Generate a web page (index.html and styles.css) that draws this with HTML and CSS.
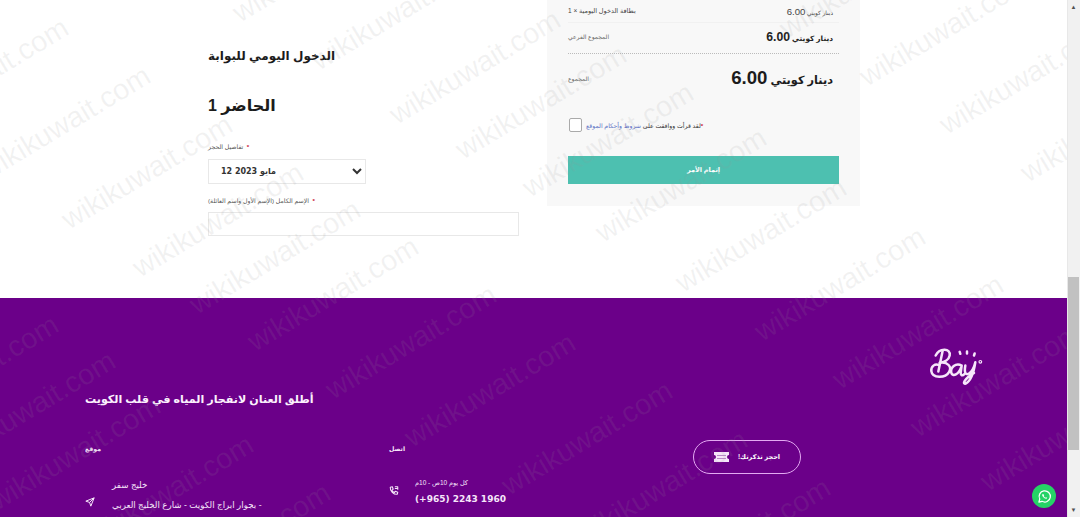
FILE: index.html
```html
<!DOCTYPE html>
<html lang="ar">
<head>
    <meta charset="UTF-8">
    <title>Bay</title>
    <link rel="stylesheet" href="styles.css">
</head>
<body>
    <div class="page">
        <div class="main">
            <section class="booking">
                <form class="booking-form">
                    <h2 class="form-title" dir="rtl">الدخول اليومي للبوابة</h2>
                    <h3 class="form-count" dir="rtl">الحاضر 1</h3>
                    <label class="field-label" dir="rtl"><span class="req">*</span>&nbsp; تفاصيل الحجز</label>
                    <select class="field-select">
                        <option>12 2023 مايو</option>
                    </select>
                    <label class="field-label field-label-name" dir="rtl"><span class="req">*</span>&nbsp; الإسم الكامل (الإسم الأول واسم العائلة)</label>
                    <input class="field-input" type="text">
                </form>

                <div class="order-card">
                    <div class="order-row order-row-item">
                        <span class="item-name" dir="rtl">بطاقة الدخول اليومية × 1</span>
                        <span class="item-price" dir="rtl">دينار كويتي <span class="amount">6.00</span></span>
                    </div>
                    <div class="order-row order-row-sub">
                        <span class="sum-label" dir="rtl">المجموع الفرعي</span>
                        <span class="sub-price" dir="rtl">دينار كويتي <span class="amount">6.00</span></span>
                    </div>
                    <div class="order-row order-row-total">
                        <span class="sum-label" dir="rtl">المجموع</span>
                        <span class="total-price" dir="rtl">دينار كويتي <span class="amount">6.00</span></span>
                    </div>
                    <div class="terms">
                        <input class="terms-box" type="checkbox">
                        <span class="terms-text" dir="rtl"><span class="req">*</span>لقد قرأت ووافقت على <a href="#">شروط وأحكام الموقع</a></span>
                    </div>
                    <button class="submit-btn" type="button" dir="rtl">إتمام الأمر</button>
                </div>
            </section>

            <footer class="footer">
                <div class="footer-logo">
                    <svg class="logo" viewBox="740 20 180 125" fill="none" stroke="#f6e6fa" stroke-width="7.500" stroke-linecap="round" stroke-linejoin="round">
                        <path d="M766 48C776 26 812 24 808 48C806 60 792 68 778 70C802 66 816 82 806 98C796 116 756 118 753 95C751 80 765 72 774 76"/>
                        <path d="M787 34L774 96"/>
                        <path d="M844 78C826 68 809 85 813 100C816 112 836 108 844 78L841 100C841 108 846 110 852 104"/>
                        <path d="M855 78C851 100 856 108 866 102C876 95 881 85 885 68C881 95 871 125 856 132C846 135 849 120 881 100"/>
                        <path d="M838 37L840 43M860 36V42M883 42L881 48"/>
                        <circle cx="900" cy="67" r="4" stroke-width="3.500"/>
                    </svg>
                </div>
                <h2 class="footer-title" dir="rtl">أطلق العنان لانفجار المياه في قلب الكويت</h2>
                <div class="footer-cols">
                    <div class="footer-col">
                        <h4 class="col-title" dir="rtl">موقع</h4>
                        <div class="address">
                            <svg class="nav-icon" viewBox="0 0 24 24" fill="none" stroke="#f6e6fa" stroke-width="2.400" stroke-linejoin="round">
                                <path d="M22 2L2 10l9 3 3 9z"/>
                                <path d="M22 2L11 13"/>
                            </svg>
                            <div class="address-lines">
                                <p dir="rtl">خليج سفر</p>
                                <p dir="rtl">- بجوار ابراج الكويت - شارع الخليج العربي</p>
                                <p dir="rtl">القبلة - مدينة الكويت - دولة الكويت</p>
                            </div>
                        </div>
                    </div>
                    <div class="footer-col">
                        <h4 class="col-title" dir="rtl">اتصل</h4>
                        <div class="contact">
                            <svg class="phone-icon" viewBox="0 0 24 24" fill="none" stroke="#f6e6fa" stroke-width="2.600" stroke-linejoin="round">
                                <path d="M3 4l5-1 2 6-3 2c1 3 3 5 6 6l2-3 6 2-1 5c-9 1-18-8-17-17z"/>
                                <path d="M14 3h7v7M14 7h7"/>
                            </svg>
                            <div class="contact-lines">
                                <p class="hours" dir="rtl">كل يوم 10ص - 10م</p>
                                <p class="phone">(+965) 2243 1960</p>
                            </div>
                        </div>
                    </div>
                    <div class="footer-col">
                        <a class="ticket-btn" href="#">
                            <svg class="ticket-icon" viewBox="0 0 15 10">
                                <path fill="#f6e6fa" d="M0 0h15v3a2 2 0 0 0 0 4v3H0V7a2 2 0 0 0 0-4z"/>
                                <path stroke="#b98ac8" stroke-width="1" d="M3 3.500h9M3 6.500h9"/>
                            </svg>
                            <span dir="rtl">احجز تذكرتك!</span>
                        </a>
                    </div>
                </div>
            </footer>

            <!-- filigrane par dessus la page -->
            <svg class="watermark" width="1067" height="517">
                <text transform="translate(-95 133) rotate(-31)">wikikuwait.com</text>
                <text transform="translate(-13 181) rotate(-31)">wikikuwait.com</text>
                <text transform="translate(69 230) rotate(-31)">wikikuwait.com</text>
                <text transform="translate(140 278) rotate(-31)">wikikuwait.com</text>
                <text transform="translate(197 315) rotate(-31)">wikikuwait.com</text>
                <text transform="translate(255 352) rotate(-31)">wikikuwait.com</text>
                <text transform="translate(333 400) rotate(-31)">wikikuwait.com</text>
                <text transform="translate(412 448) rotate(-31)">wikikuwait.com</text>
                <text transform="translate(509 496) rotate(-31)">wikikuwait.com</text>
                <text transform="translate(584 545) rotate(-31)">wikikuwait.com</text>
                <text transform="translate(667 593) rotate(-31)">wikikuwait.com</text>
                <text transform="translate(240 23) rotate(-31)">wikikuwait.com</text>
                <text transform="translate(319 71) rotate(-31)">wikikuwait.com</text>
                <text transform="translate(397 125) rotate(-31)">wikikuwait.com</text>
                <text transform="translate(463 160) rotate(-31)">wikikuwait.com</text>
                <text transform="translate(530 198) rotate(-31)">wikikuwait.com</text>
                <text transform="translate(603 243) rotate(-31)">wikikuwait.com</text>
                <text transform="translate(683 293) rotate(-31)">wikikuwait.com</text>
                <text transform="translate(762 342) rotate(-31)">wikikuwait.com</text>
                <text transform="translate(840 390) rotate(-31)">wikikuwait.com</text>
                <text transform="translate(918 438) rotate(-31)">wikikuwait.com</text>
                <text transform="translate(988 492) rotate(-31)">wikikuwait.com</text>
                <text transform="translate(787 39) rotate(-31)">wikikuwait.com</text>
                <text transform="translate(867 87) rotate(-31)">wikikuwait.com</text>
                <text transform="translate(947 135) rotate(-31)">wikikuwait.com</text>
                <text transform="translate(1028 183) rotate(-31)">wikikuwait.com</text>
                <text transform="translate(-105 430) rotate(-31)">wikikuwait.com</text>
                <text transform="translate(-48 466) rotate(-31)">wikikuwait.com</text>
                <text transform="translate(-3 511) rotate(-31)">wikikuwait.com</text>
                <text transform="translate(90 550) rotate(-31)">wikikuwait.com</text>
                <text transform="translate(167 598) rotate(-31)">wikikuwait.com</text>
            </svg>

            <a class="whatsapp" href="#">
                <svg viewBox="0 0 24 24" width="15" height="15" fill="none" stroke="#fff" stroke-width="2">
                    <path d="M3 21l1.400-5A9 9 0 1 1 8 19.700z" stroke-linejoin="round"/>
                    <path d="M9 8c-1 1-.9 2.600.5 4.500S13 15.500 14.500 15.500c1 0 1.700-.6 1.800-1.500l-2-1-.8.9c-1-.4-2.300-1.600-2.800-2.800l.8-.8-1-2.100z" fill="#fff" stroke="none"/>
                </svg>
            </a>
        </div>

        <div class="scrollbar">
            <span class="scroll-arrow">▲</span>
            <div class="scroll-track"><div class="scroll-thumb"></div></div>
            <span class="scroll-arrow">▼</span>
        </div>
    </div>
</body>
</html>
```

FILE: styles.css
```css
html, body {
    margin: 0;
    height: 517px;
    overflow: hidden;
}

body {
    background-color: #fff;
    color: #222;
    font-family: "Liberation Sans", "DejaVu Sans", sans-serif;
    text-align: left;
}

p, h2, h3, h4 {
    margin: 0;
}

.page {
    display: flex;
    height: 517px;
}

.main {
    position: relative;
    width: 1067px;
    height: 517px;
    overflow: hidden;
}

/* partie haute */
.booking {
    display: flex;
    gap: 28px;
    height: 298px;
    padding-left: 208px;
    box-sizing: border-box;
}

.booking-form {
    display: flex;
    flex-direction: column;
    align-items: flex-start;
    width: 311px;
    padding-top: 47px;
}

.form-title {
    font-size: 12px;
    line-height: 18px;
    color: #1c1c1c;
}

.form-count {
    margin-top: 29px;
    font-size: 16px;
    line-height: 24px;
    color: #1c1c1c;
}

.field-label {
    margin-top: 24px;
    font-size: 6.200px;
    line-height: 10px;
    color: #555;
}

.field-label-name {
    margin-top: 12px;
}

.req {
    color: #c8102e;
    font-weight: bold;
}

.field-select {
    width: 158px;
    height: 25px;
    margin-top: 7px;
    padding-left: 8px;
    border: 1px solid #e8e8e8;
    background-color: #fff;
    color: #333;
    font-family: "DejaVu Sans", sans-serif;
    font-size: 8px;
    font-weight: bold;
}

.field-input {
    width: 311px;
    height: 24px;
    margin-top: 6px;
    border: 1px solid #e8e8e8;
    box-sizing: border-box;
    background-color: #fff;
}

.order-card {
    width: 313px;
    height: 206px;
    padding: 0 21px;
    box-sizing: border-box;
    background-color: #f8f8f8;
}

.order-row {
    display: flex;
    justify-content: space-between;
    align-items: center;
}

.amount {
    font-size: 1.650em;
}

.order-row-item {
    height: 22px;
    border-bottom: 1px solid #f1f1f1;
    font-size: 6.500px;
    color: #444;
}

.item-price {
    margin-right: 6px;
    font-size: 5.800px;
}

.order-row-sub {
    height: 27px;
    padding-bottom: 3px;
    border-bottom: 1px dotted #bbb;
}

.sum-label {
    font-size: 6px;
    color: #666;
}

.sub-price {
    margin-right: 6px;
    font-size: 7.400px;
    font-weight: bold;
    color: #222;
}

.order-row-total {
    height: 48px;
}

.total-price {
    margin-right: 6px;
    font-size: 11.300px;
    font-weight: bold;
    color: #1c1c1c;
}

.terms {
    display: flex;
    align-items: center;
    gap: 4px;
    margin-top: 16px;
}

.terms-box {
    appearance: none;
    width: 13px;
    height: 14px;
    margin: 0 0 0 1px;
    border: 1px solid #aaa;
    border-radius: 2px;
    background-color: #fff;
}

.terms-text {
    font-size: 6.200px;
    color: #333;
}

.terms-text a {
    color: #5b6fc4;
    text-decoration: none;
}

.submit-btn {
    display: block;
    width: 271px;
    height: 28px;
    margin-top: 24px;
    padding: 0;
    border: none;
    background-color: #4dc0b0;
    color: #fff;
    font-family: inherit;
    font-size: 6.500px;
    font-weight: bold;
    text-align: center;
}

/* pied de page */
.footer {
    height: 219px;
    padding: 48px 80px 0 85px;
    box-sizing: border-box;
    background-color: #6b0089;
    color: #f6e6fa;
}

.footer-logo {
    display: flex;
    justify-content: flex-end;
}

.logo {
    width: 60px;
    height: 42px;
}

.footer-title {
    padding-top: 1px;
    font-size: 11.100px;
    line-height: 20px;
    color: #fbf1fd;
}

.footer-cols {
    display: grid;
    grid-template-columns: 304px 304px 1fr;
    margin-top: 31px;
}

.col-title {
    padding-top: 3px;
    font-size: 6.200px;
    line-height: 12px;
}

.address {
    display: flex;
    align-items: center;
    gap: 17px;
    margin-top: 20px;
}

.nav-icon {
    width: 10px;
    height: 10px;
    flex: none;
    margin-bottom: 6px;
}

.address-lines {
    font-size: 8.700px;
    line-height: 20px;
}

.contact {
    display: flex;
    align-items: center;
    gap: 16px;
    margin-top: 22px;
}

.phone-icon {
    width: 10px;
    height: 11px;
    flex: none;
    margin-bottom: 3px;
}

.hours {
    font-size: 6.500px;
    line-height: 12px;
}

.phone {
    margin-top: 3px;
    font-family: "DejaVu Sans", sans-serif;
    font-size: 9px;
    font-weight: bold;
    line-height: 14px;
}

.ticket-btn {
    display: flex;
    align-items: center;
    justify-content: center;
    gap: 9px;
    width: 108px;
    height: 34px;
    border: 1px solid #e3a9f2;
    border-radius: 17px;
    box-sizing: border-box;
    color: #fff;
    font-size: 6.500px;
    font-weight: bold;
    text-decoration: none;
}

.ticket-icon {
    width: 15px;
    height: 10px;
}

.watermark {
    position: absolute;
    top: 0;
    left: 0;
    pointer-events: none;
}

.watermark text {
    font-family: "Liberation Sans", sans-serif;
    font-size: 29px;
    fill: rgba(150, 150, 150, 0.12);
}

.whatsapp {
    position: absolute;
    top: 484px;
    left: 1032px;
    display: flex;
    align-items: center;
    justify-content: center;
    width: 24px;
    height: 24px;
    border-radius: 50%;
    background-color: #25d366;
}

/* barre de defilement */
.scrollbar {
    display: flex;
    flex-direction: column;
    width: 13px;
    background-color: #f1f1f1;
    box-shadow: inset 1px 0 0 #e8e8e8;
}

.scroll-arrow {
    height: 14px;
    font-size: 6px;
    line-height: 14px;
    text-align: center;
    color: #505050;
}

.scroll-track {
    flex: 1;
}

.scroll-thumb {
    width: 11px;
    height: 173px;
    margin: 263px 0 0 1px;
    background-color: #c1c1c1;
}
```
